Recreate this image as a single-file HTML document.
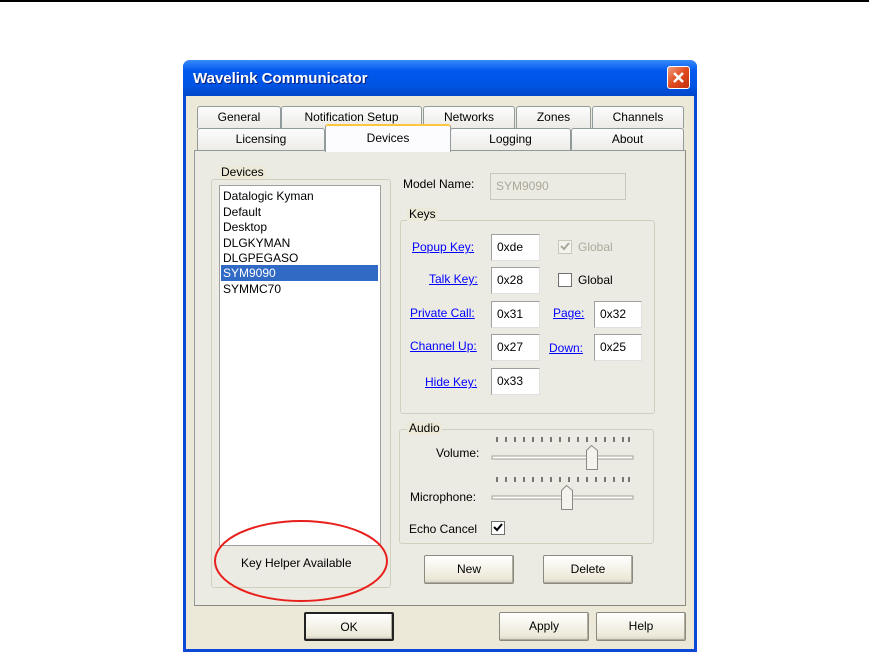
<!DOCTYPE html>
<html><head><style>
body{margin:0;width:869px;height:653px;background:#fff;position:relative;overflow:hidden;font-family:"Liberation Sans",sans-serif;font-size:12px;color:#000}
div,span{position:absolute;box-sizing:border-box}
.t{white-space:nowrap}
.tab{background:linear-gradient(#fcfcfe,#ecebe6);border:1px solid #919b9c;border-bottom:none;border-radius:3px 3px 0 0;text-align:center;line-height:20px;height:22px}
.box{background:#fff;border:1px solid #a0a0a0;border-right-color:#e0e0e0;border-bottom-color:#e0e0e0;padding-left:5px;line-height:24px}
.grp{border:1px solid #d0d0bf;border-radius:3px}
.lg{background:#ece9d8;padding:0 2px;line-height:13px}
.lnk{color:#0000ff;text-decoration:underline;white-space:nowrap}
.btn{border:1px solid #8a8a80;border-radius:2px;background:linear-gradient(#fff,#ece9d8 85%,#d6d0c5);text-align:center;line-height:26px;box-shadow:inset -1px -1px #b0ab9c}
.cb{width:14px;height:14px;border:1px solid #707070;background:#fff}
</style></head><body>
<div style="left:0;top:0;width:869px;height:2px;background:#000"></div>
<div style="left:183px;top:60px;width:514px;height:592px;background:#0a48d8;border-radius:7px 7px 0 0"></div>
<div style="left:183px;top:60px;width:514px;height:36px;background:linear-gradient(#3a8cfb,#0058ee 30%,#0054e3 70%,#0046c8);border-radius:7px 7px 0 0"></div>
<div class="t" style="left:193px;top:70px;color:#fff;font-weight:bold;font-size:15px;text-shadow:1px 1px #0a1e80">Wavelink Communicator</div>
<div style="left:667px;top:66px;width:23px;height:23px;border:1px solid #fff;border-radius:3px;background:linear-gradient(135deg,#f0a080,#e04a1e 50%,#c03010)"></div>
<svg style="position:absolute;left:671px;top:70px" width="15" height="15"><path d="M3 3L12 12M12 3L3 12" stroke="#fff" stroke-width="2.5"/></svg>
<div style="left:186px;top:96px;width:508px;height:553px;background:#ece9d8"></div>
<div class="tab" style="left:197px;top:106px;width:84px">General</div>
<div class="tab" style="left:281px;top:106px;width:141px">Notification Setup</div>
<div class="tab" style="left:423px;top:106px;width:92px">Networks</div>
<div class="tab" style="left:516px;top:106px;width:75px">Zones</div>
<div class="tab" style="left:592px;top:106px;width:92px">Channels</div>
<div class="tab" style="left:197px;top:128px;width:128px;height:23px">Licensing</div>
<div class="tab" style="left:450px;top:128px;width:121px;height:23px">Logging</div>
<div class="tab" style="left:571px;top:128px;width:113px;height:23px">About</div>
<div style="left:194px;top:150px;width:492px;height:456px;border:1px solid #919b9c;border-right-color:#8a8a80;border-bottom-color:#8a8a80;background:#ecebe3"></div>
<div class="tab" style="left:325px;top:124px;width:126px;height:28px;border-top:2px solid #ffc83c;background:#fcfcfe;line-height:24px">Devices</div>
<div class="grp" style="left:211px;top:179px;width:180px;height:409px"></div>
<div class="t lg" style="left:219px;top:166px">Devices</div>
<div style="left:219px;top:185px;width:162px;height:361px;background:#fff;border:1px solid #a0a0a0"></div>
<div class="t" style="left:223px;top:189px;line-height:15.5px">Datalogic Kyman<br>Default<br>Desktop<br>DLGKYMAN<br>DLGPEGASO</div>
<div style="left:221px;top:265px;width:157px;height:16px;background:#316ac5"></div>
<div class="t" style="left:223px;top:266px;color:#fff;line-height:14px">SYM9090</div>
<div class="t" style="left:223px;top:282px;line-height:15px">SYMMC70</div>
<div class="t" style="left:241px;top:556px">Key Helper Available</div>
<svg style="position:absolute;left:210px;top:517px" width="182" height="88"><ellipse cx="91" cy="44" rx="86" ry="40" fill="none" stroke="#e8201c" stroke-width="2"/></svg>
<div class="t" style="left:403px;top:177px">Model Name:</div>
<div style="left:490px;top:173px;width:136px;height:27px;border:1px solid #c9c7ba;background:#ecebe3;color:#aca899;padding-left:5px;line-height:24px">SYM9090</div>
<div class="grp" style="left:400px;top:220px;width:255px;height:194px"></div>
<div class="t lg" style="left:407px;top:208px">Keys</div>
<div class="lnk" style="left:412px;top:240px">Popup Key:</div>
<div class="box" style="left:491px;top:234px;width:49px;height:27px">0xde</div>
<div class="cb" style="left:558px;top:240px;border-color:#c9c7ba;background:#f4f3ee"></div>
<svg style="position:absolute;left:559px;top:241px" width="12" height="12"><path d="M2 5L5 8L10 2" stroke="#aca899" stroke-width="2" fill="none"/></svg>
<div class="t" style="left:578px;top:240px;color:#aca899">Global</div>
<div class="lnk" style="left:429px;top:272px">Talk Key:</div>
<div class="box" style="left:491px;top:267px;width:49px;height:27px">0x28</div>
<div class="cb" style="left:558px;top:273px"></div>
<div class="t" style="left:578px;top:273px">Global</div>
<div class="lnk" style="left:410px;top:306px">Private Call:</div>
<div class="box" style="left:491px;top:301px;width:49px;height:27px">0x31</div>
<div class="lnk" style="left:553px;top:306px">Page:</div>
<div class="box" style="left:594px;top:301px;width:48px;height:27px">0x32</div>
<div class="lnk" style="left:410px;top:339px">Channel Up:</div>
<div class="box" style="left:491px;top:334px;width:49px;height:27px">0x27</div>
<div class="lnk" style="left:549px;top:341px">Down:</div>
<div class="box" style="left:594px;top:334px;width:48px;height:27px">0x25</div>
<div class="lnk" style="left:425px;top:375px">Hide Key:</div>
<div class="box" style="left:491px;top:368px;width:49px;height:27px">0x33</div>
<div class="grp" style="left:399px;top:429px;width:255px;height:115px"></div>
<div class="t lg" style="left:407px;top:422px">Audio</div>
<div class="t" style="left:436px;top:446px">Volume:</div>
<div class="t" style="left:410px;top:490px">Microphone:</div>
<svg style="position:absolute;left:490px;top:434px" width="146" height="80">
<g stroke="#000" stroke-width="1">
<path d="M7 3v5M16 3v5M25 3v5M34 3v5M43 3v5M52 3v5M61 3v5M70 3v5M79 3v5M88 3v5M97 3v5M106 3v5M115 3v5M124 3v5M133 3v5M139 3v5"/>
<path d="M7 43v5M16 43v5M25 43v5M34 43v5M43 43v5M52 43v5M61 43v5M70 43v5M79 43v5M88 43v5M97 43v5M106 43v5M115 43v5M124 43v5M133 43v5M139 43v5"/>
</g>
<rect x="2" y="22" width="141" height="3" fill="#fff" stroke="#a0a090"/>
<rect x="2" y="62" width="141" height="3" fill="#fff" stroke="#a0a090"/>
<path d="M96.5 16.5l5-5 6 5v19h-11z" fill="#f4f3ee" stroke="#8a8a80"/>
<path d="M71.5 56.5l5-5 6 5v19h-11z" fill="#f4f3ee" stroke="#8a8a80"/>
</svg>
<div class="t" style="left:409px;top:522px">Echo Cancel</div>
<div class="cb" style="left:491px;top:521px"></div>
<svg style="position:absolute;left:492px;top:522px" width="12" height="12"><path d="M2 5L5 8L10 2" stroke="#000" stroke-width="2" fill="none"/></svg>
<div class="btn" style="left:424px;top:555px;width:90px;height:29px">New</div>
<div class="btn" style="left:543px;top:555px;width:90px;height:29px">Delete</div>
<div class="btn" style="left:304px;top:612px;width:90px;height:29px;border:2px solid #222">OK</div>
<div class="btn" style="left:499px;top:612px;width:90px;height:29px">Apply</div>
<div class="btn" style="left:596px;top:612px;width:90px;height:29px">Help</div>
</body></html>
